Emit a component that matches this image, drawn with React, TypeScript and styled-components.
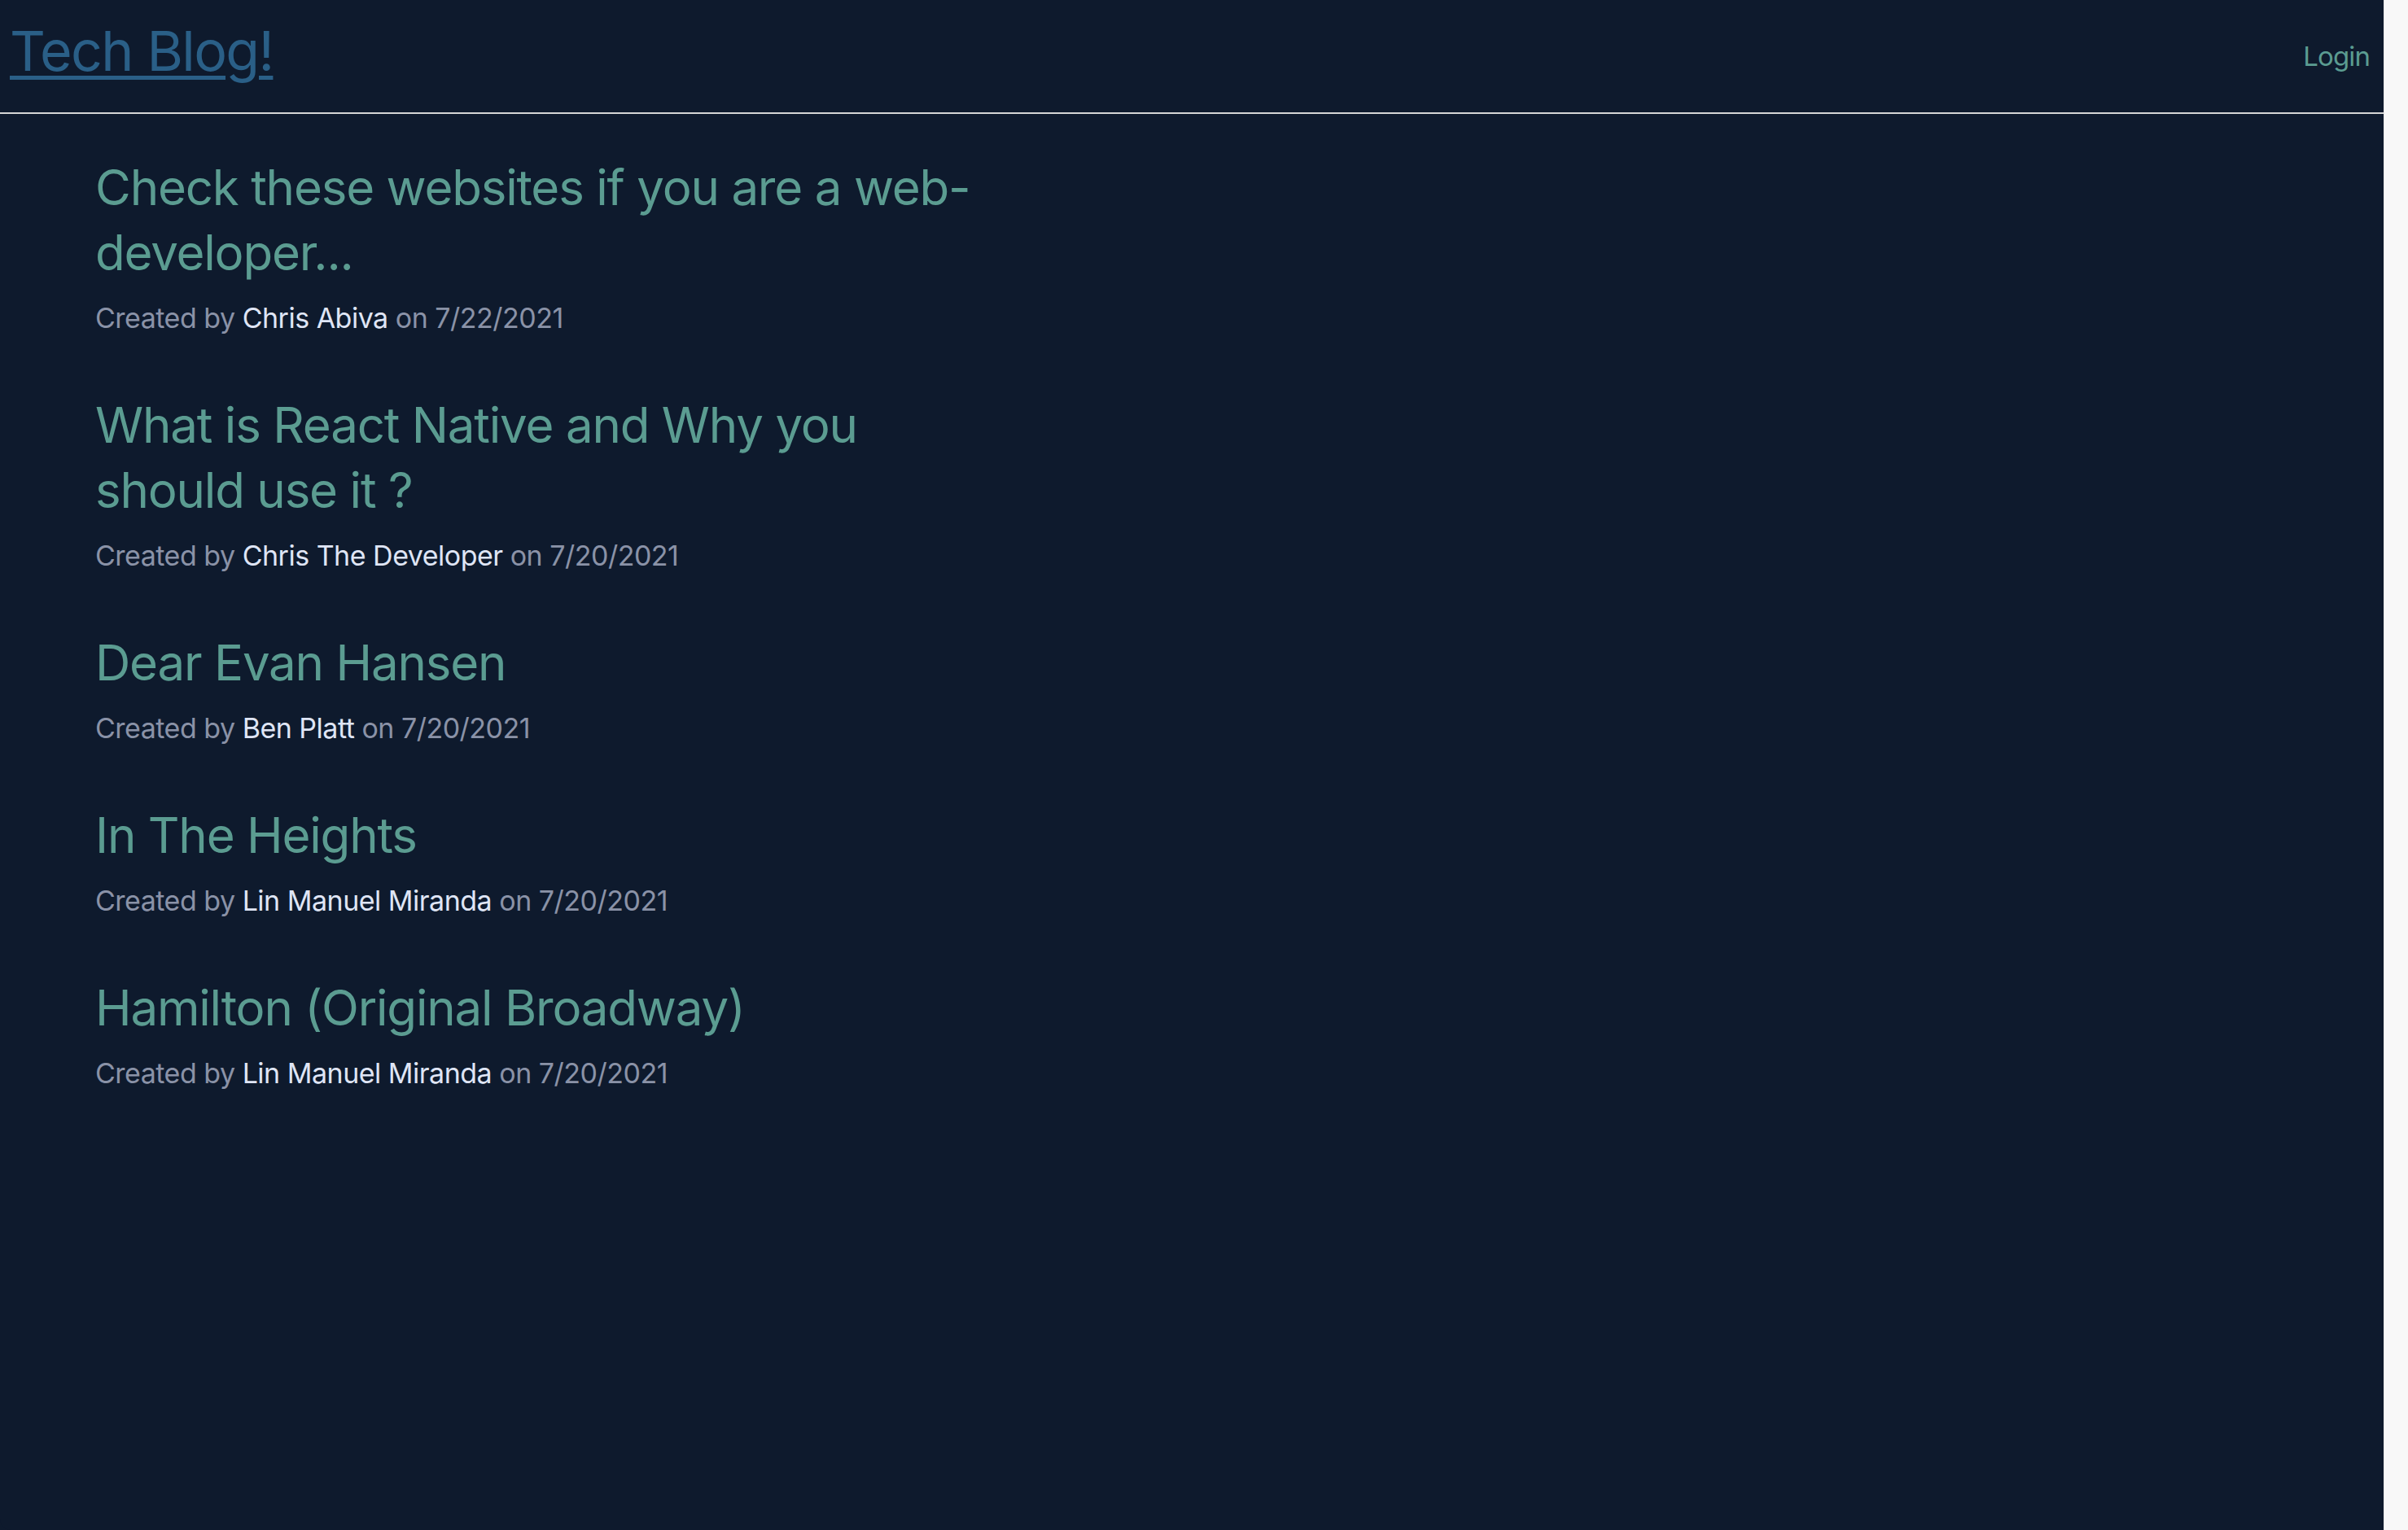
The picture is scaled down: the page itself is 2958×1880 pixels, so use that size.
import React from "react";
import styled, { createGlobalStyle } from "styled-components";

const GlobalStyle = createGlobalStyle`
  html, body {
    margin: 0;
    padding: 0;
    height: 100%;
  }
  body {
    font-family: "Inter", "Noto Sans", sans-serif;
    background: #0e1a2d;
  }
  #root {
    height: 100%;
  }
`;

const Page = styled.div`
  display: flex;
  height: 1880px;
  width: 100%;
`;

const Main = styled.div`
  flex: 1;
  display: flex;
  flex-direction: column;
  background: #0e1a2d;
  border-bottom-left-radius: 14px;
`;

const ScrollTrack = styled.div`
  width: 29px;
  background: #f8f8f8;
  border-left: 1px solid #e6e6e6;
`;

const Header = styled.header`
  display: flex;
  justify-content: space-between;
  align-items: flex-start;
  height: 138px;
  box-sizing: content-box;
  padding: 0 17px 0 12px;
  border-bottom: 2px solid #d6d6d6;
`;

const Brand = styled.a`
  margin-top: 22px;
  font-size: 68px;
  line-height: 1.2;
  color: #2a5f87;
  text-decoration: underline;
  text-decoration-thickness: 5px;
  text-underline-offset: 6px;
  letter-spacing: -1.6px;
`;

const NavLink = styled.a`
  margin-top: 50px;
  font-size: 33px;
  line-height: 1.2;
  color: #5b9c91;
  text-decoration: none;
  letter-spacing: -0.9px;
`;

const PostList = styled.main`
  display: flex;
  flex-direction: column;
  gap: 67px;
  padding: 50px 0 0 117px;
  max-width: 1095px;
`;

const Post = styled.article`
  display: flex;
  flex-direction: column;
`;

const PostTitle = styled.h2`
  margin: 0;
  font-size: 60px;
  font-weight: 400;
  line-height: 80px;
  color: #5b9c91;
  letter-spacing: -1.2px;
`;

const Meta = styled.p`
  margin: 17px 0 0;
  font-size: 34px;
  line-height: 48px;
  color: #8a92a7;
  letter-spacing: -0.5px;
`;

const Author = styled.span`
  color: #dfe5f5;
`;

const posts = [
  {
    title: "Check these websites if you are a web-developer...",
    author: "Chris Abiva",
    date: "7/22/2021",
  },
  {
    title: "What is React Native and Why you should use it ?",
    author: "Chris The Developer",
    date: "7/20/2021",
  },
  { title: "Dear Evan Hansen", author: "Ben Platt", date: "7/20/2021" },
  { title: "In The Heights", author: "Lin Manuel Miranda", date: "7/20/2021" },
  {
    title: "Hamilton (Original Broadway)",
    author: "Lin Manuel Miranda",
    date: "7/20/2021",
  },
];

export default function App() {
  return (
    <>
      <GlobalStyle />
      <Page>
        <Main>
          <Header>
            <Brand href="#">Tech Blog!</Brand>
            <NavLink href="#">Login</NavLink>
          </Header>
          <PostList>
            {posts.map((p) => (
              <Post key={p.title}>
                <PostTitle>{p.title}</PostTitle>
                <Meta>
                  Created by <Author>{p.author}</Author> on {p.date}
                </Meta>
              </Post>
            ))}
          </PostList>
        </Main>
        <ScrollTrack />
      </Page>
    </>
  );
}
